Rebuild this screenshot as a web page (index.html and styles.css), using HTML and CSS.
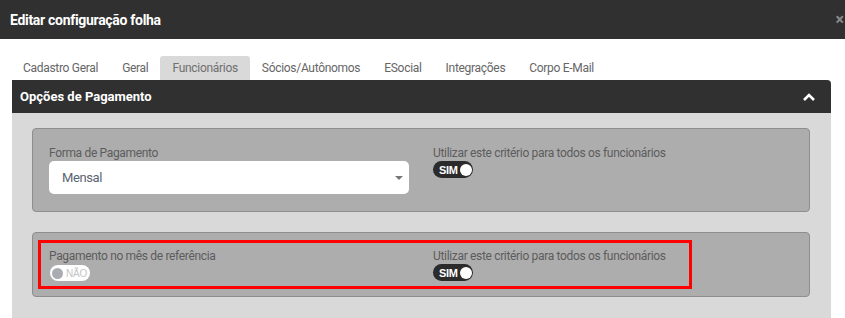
FILE: index.html
```html
<!DOCTYPE html>
<html lang="pt-br">
  <head>
    <meta charset="UTF-8" />
    <meta name="viewport" content="width=device-width, initial-scale=1.0" />
    <title>Editar configuração folha</title>

    <link rel="stylesheet" href="styles.css">
  </head>

  <body>
    <div class="modal">
      <header class="modal-topo">
        <h1>Editar configuração folha</h1>
        <span class="fechar">&times;</span>
      </header>

      <div class="modal-corpo">
        <ul class="abas">
          <li>Cadastro Geral</li>
          <li>Geral</li>
          <li class="ativa">Funcionários</li>
          <li>Sócios/Autônomos</li>
          <li>ESocial</li>
          <li>Integrações</li>
          <li>Corpo E-Mail</li>
        </ul>

        <section class="painel">
          <div class="painel-topo">
            <h2>Opções de Pagamento</h2>
            <svg class="seta" width="14" height="10" viewBox="0 0 14 10">
              <path d="M2 8 L7 3 L12 8" fill="none" stroke="#fff" stroke-width="2.6" />
            </svg>
          </div>

          <div class="painel-corpo">
            <div class="card-opcao">
              <div class="linha-opcao">
                <div class="campo">
                  <label>Forma de Pagamento</label>
                  <div class="select-falso">
                    <span>Mensal</span>
                    <span class="caret"></span>
                  </div>
                </div>
                <div class="campo">
                  <label>Utilizar este critério para todos os funcionários</label>
                  <span class="toggle ligado">SIM<i></i></span>
                </div>
              </div>
            </div>

            <div class="card-opcao card-destaque">
              <div class="linha-opcao destaque">
                <div class="campo">
                  <label>Pagamento no mês de referência</label>
                  <span class="toggle desligado"><i></i>NÃO</span>
                </div>
                <div class="campo">
                  <label>Utilizar este critério para todos os funcionários</label>
                  <span class="toggle ligado">SIM<i></i></span>
                </div>
              </div>
            </div>
          </div>
        </section>
      </div>
    </div>
  </body>
</html>
```

FILE: styles.css
```css
body {
  font-family: Roboto, "Liberation Sans", sans-serif;
  margin: 0;
  padding: 0;
  background-color: #ffffff;
  overflow: hidden;
}

.modal {
  width: 845px;
}

/* Topo escuro do modal */
.modal-topo {
  background: #303030;
  height: 39px;
  display: flex;
  align-items: center;
  justify-content: space-between;
  padding: 0 0 0 10px;
}

.modal-topo h1 {
  margin: 0;
  color: #ffffff;
  font-size: 14px;
  font-weight: 700;
  letter-spacing: -0.3px;
}

.fechar {
  color: #8a8a8a;
  font-size: 16px;
  font-weight: 700;
  margin-right: 1px;
}

.modal-corpo {
  padding: 17px 14px 0 12px;
}

/* Abas */
.abas {
  list-style: none;
  margin: 0;
  padding: 0;
  display: flex;
}

.abas li {
  height: 24px;
  line-height: 24px;
  padding: 0 12px;
  font-size: 12px;
  color: #666666;
  letter-spacing: -0.3px;
}

.abas li:first-child {
  margin-left: -1px;
}

.abas li.ativa {
  background: #d9d9d9;
  color: #6f6f6f;
  border-radius: 3px 3px 0 0;
}

/* Painel */
.painel-topo {
  background: #303030;
  height: 33px;
  display: flex;
  align-items: center;
  justify-content: space-between;
  padding: 0 15px 0 8px;
  border-radius: 0 4px 0 0;
}

.painel-topo h2 {
  margin: 0;
  color: #ffffff;
  font-size: 13px;
  font-weight: 700;
}

.painel-corpo {
  background: #d9d9d9;
  padding: 15px 21px 20px 20px;
}

.card-opcao {
  background: #adadad;
  border: 1px solid #8e8e8e;
  border-radius: 4px;
  padding: 17px 16px;
  margin-bottom: 20px;
}

.card-destaque {
  padding: 7px 5px;
}

.linha-opcao {
  display: grid;
  grid-template-columns: 360px auto;
  column-gap: 24px;
}

.destaque {
  border: 3px solid #ff0000;
  padding: 6px 0 5px 8px;
  box-sizing: border-box;
  width: 654px;
}

.campo {
  display: flex;
  flex-direction: column;
  align-items: flex-start;
}

.campo label {
  font-size: 12px;
  color: #5c5c5c;
  line-height: 15px;
  letter-spacing: -0.33px;
}

.select-falso {
  align-self: stretch;
  height: 33px;
  background: #ffffff;
  border-radius: 5px;
  display: flex;
  align-items: center;
  justify-content: space-between;
  padding: 0 6px 0 13px;
  font-size: 13px;
  color: #5b6472;
  letter-spacing: -0.4px;
  box-sizing: border-box;
}

.caret {
  width: 0;
  height: 0;
  border-left: 4px solid transparent;
  border-right: 4px solid transparent;
  border-top: 4px solid #777777;
}

/* Toggles SIM / NÃO */
.toggle {
  display: inline-flex;
  align-items: center;
  height: 17px;
  border-radius: 9px;
  font-size: 11px;
  font-family: "Liberation Sans", Arial, sans-serif;
  box-sizing: border-box;
}

.toggle i {
  width: 12px;
  height: 12px;
  border-radius: 50%;
}

.toggle.ligado {
  width: 40px;
  background: #2b2b2b;
  color: #ffffff;
  padding: 0 1px 0 6px;
  justify-content: space-between;
  font-weight: 700;
  letter-spacing: -0.3px;
}

.toggle.ligado i {
  background: #ffffff;
}

.toggle.desligado {
  height: 16px;
  margin-left: 1px;
  margin-top: 1px;
  background: #ffffff;
  color: #c4c4c4;
  padding: 0 3px 0 2px;
  gap: 3px;
  font-size: 10px;
  letter-spacing: -0.2px;
}

.toggle.desligado i {
  flex: none;
  width: 11px;
  height: 11px;
  background: #a9adb2;
}
```
